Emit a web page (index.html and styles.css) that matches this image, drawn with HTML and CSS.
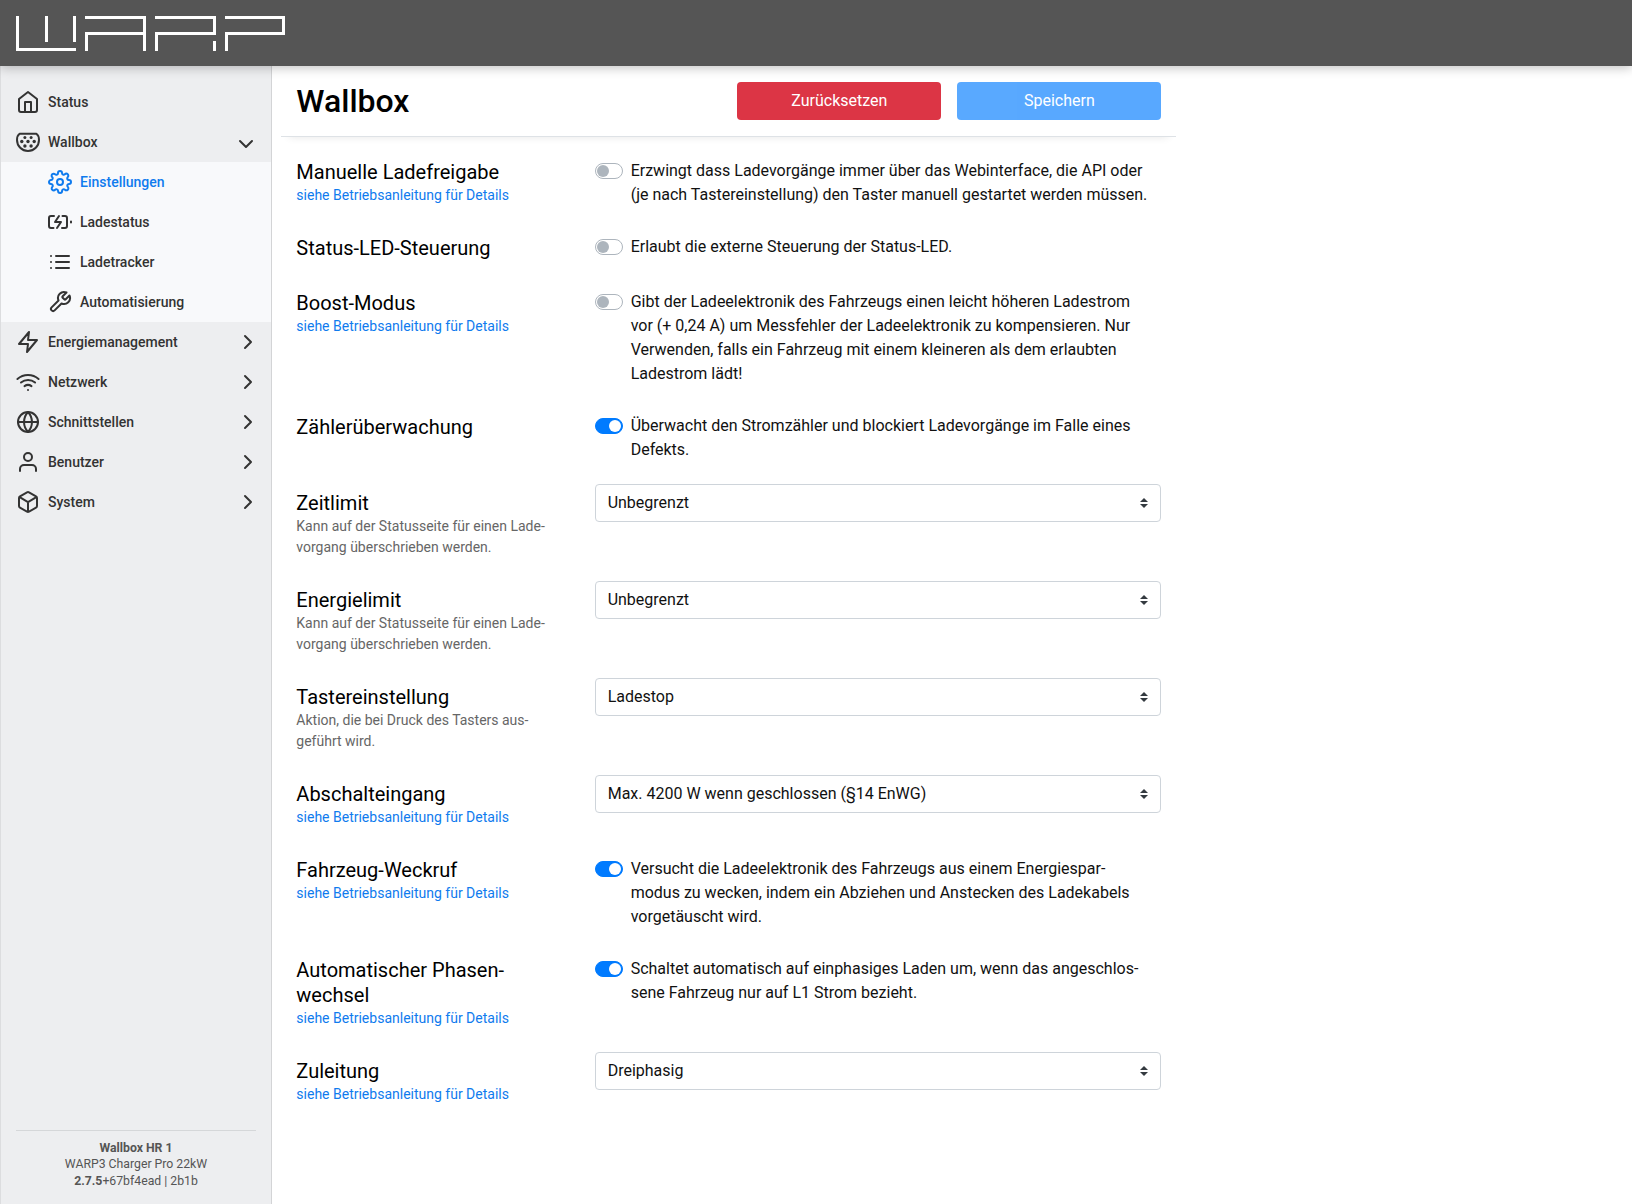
FILE: index.html
```html
<!DOCTYPE html>
<html lang="de">
<head>
<meta charset="utf-8">
<title>Wallbox</title>
<link rel="stylesheet" href="styles.css">
</head>
<body>
<header class="topbar">
  <svg class="logo" width="269" height="35" viewBox="0 0 269 35" fill="none" stroke="#fff" stroke-width="3">
    <path d="M1.5 0V33.5H60M30.5 0V26M58.5 0V26"/>
    <path d="M69 1.5H128.500V35M70.500 35V17.500H128"/>
    <path d="M139 1.5H198.500V17.500H140.500V35M198.500 25V35"/>
    <path d="M209 1.5H267.500V17.500H210.500V35"/>
  </svg>
</header>
<div class="layout">
  <nav class="sidebar">
    <ul class="menu">
      <li class="item"><svg class="icon" viewBox="0 0 24 24"><path d="M3 9l9-7 9 7v11a2 2 0 0 1-2 2H5a2 2 0 0 1-2-2z"/><path d="M9 22V12h6v10"/></svg>Status</li>
      <li class="item"><svg class="icon" viewBox="0 0 24 24"><path d="M3.600 3.700H20.400Q23 5.500 23 10A11 11 0 0 1 1 10Q1 5.500 3.600 3.700Z"/><g class="pins"><circle cx="8.900" cy="7.400" r="1.500"/><circle cx="15.100" cy="7.400" r="1.500"/><circle cx="5.800" cy="11.500" r="1.700"/><circle cx="12" cy="11.500" r="1.700"/><circle cx="18.200" cy="11.500" r="1.700"/><circle cx="8.900" cy="16" r="1.700"/><circle cx="15.100" cy="16" r="1.700"/></g></svg>Wallbox<svg class="chevron chevron-open" viewBox="0 0 24 24"><path d="M6 9l6 6 6-6"/></svg></li>
      <li>
        <ul class="submenu">
          <li class="item active"><svg class="icon" viewBox="0 0 24 24"><circle cx="12" cy="12" r="3"/><path d="M19.400 15a1.650 1.650 0 0 0 .33 1.820l.06.06a2 2 0 0 1 0 2.830 2 2 0 0 1-2.830 0l-.06-.06a1.650 1.650 0 0 0-1.820-.33 1.650 1.650 0 0 0-1 1.510V21a2 2 0 0 1-2 2 2 2 0 0 1-2-2v-.09A1.650 1.650 0 0 0 9 19.400a1.650 1.650 0 0 0-1.820.33l-.06.06a2 2 0 0 1-2.830 0 2 2 0 0 1 0-2.830l.06-.06a1.650 1.650 0 0 0 .33-1.820 1.650 1.650 0 0 0-1.510-1H3a2 2 0 0 1-2-2 2 2 0 0 1 2-2h.09A1.650 1.650 0 0 0 4.600 9a1.650 1.650 0 0 0-.33-1.820l-.06-.06a2 2 0 0 1 0-2.830 2 2 0 0 1 2.830 0l.06.06a1.650 1.650 0 0 0 1.820.33H9a1.650 1.650 0 0 0 1-1.510V3a2 2 0 0 1 2-2 2 2 0 0 1 2 2v.09a1.650 1.650 0 0 0 1 1.510 1.650 1.650 0 0 0 1.820-.33l.06-.06a2 2 0 0 1 2.830 0 2 2 0 0 1 0 2.830l-.06.06a1.650 1.650 0 0 0-.33 1.820V9a1.650 1.650 0 0 0 1.510 1H21a2 2 0 0 1 2 2 2 2 0 0 1-2 2h-.09a1.650 1.650 0 0 0-1.510 1z"/></svg>Einstellungen</li>
          <li class="item"><svg class="icon" viewBox="0 0 24 24"><path d="M5.500 18H3a2 2 0 0 1-2-2V8a2 2 0 0 1 2-2h3M14.500 6H17a2 2 0 0 1 2 2v8a2 2 0 0 1-2 2h-3M11 6l-4 6h6l-4 6M23 11.500v1"/></svg>Ladestatus</li>
          <li class="item"><svg class="icon" viewBox="0 0 24 24"><path d="M8 6h13M8 12h13M8 18h13M3 6h.01M3 12h.01M3 18h.01"/></svg>Ladetracker</li>
          <li class="item"><svg class="icon" viewBox="0 0 24 24"><path d="M14.700 6.300a1 1 0 0 0 0 1.400l1.600 1.600a1 1 0 0 0 1.400 0l3.770-3.770a6 6 0 0 1-7.940 7.940l-6.910 6.910a2.120 2.120 0 0 1-3-3l6.910-6.910a6 6 0 0 1 7.940-7.940l-3.760 3.760z"/></svg>Automatisierung</li>
        </ul>
      </li>
      <li class="item"><svg class="icon" viewBox="0 0 24 24"><path d="M13 2L3 14h9l-1 8 10-12h-9l1-8z"/></svg>Energiemanagement<svg class="chevron" viewBox="0 0 24 24"><path d="M9 18l6-6-6-6"/></svg></li>
      <li class="item"><svg class="icon" viewBox="0 0 24 24"><path d="M5 12.550a11 11 0 0 1 14.080 0M1.420 9a16 16 0 0 1 21.160 0M8.530 16.110a6 6 0 0 1 6.950 0M12 20h.01"/></svg>Netzwerk<svg class="chevron" viewBox="0 0 24 24"><path d="M9 18l6-6-6-6"/></svg></li>
      <li class="item"><svg class="icon" viewBox="0 0 24 24"><circle cx="12" cy="12" r="10"/><path d="M2 12h20M12 2a15.300 15.300 0 0 1 4 10 15.300 15.300 0 0 1-4 10 15.300 15.300 0 0 1-4-10 15.300 15.300 0 0 1 4-10z"/></svg>Schnittstellen<svg class="chevron" viewBox="0 0 24 24"><path d="M9 18l6-6-6-6"/></svg></li>
      <li class="item"><svg class="icon" viewBox="0 0 24 24"><path d="M20 21v-2a4 4 0 0 0-4-4H8a4 4 0 0 0-4 4v2"/><circle cx="12" cy="7" r="4"/></svg>Benutzer<svg class="chevron" viewBox="0 0 24 24"><path d="M9 18l6-6-6-6"/></svg></li>
      <li class="item"><svg class="icon" viewBox="0 0 24 24"><path d="M21 16V8a2 2 0 0 0-1-1.730l-7-4a2 2 0 0 0-2 0l-7 4A2 2 0 0 0 3 8v8a2 2 0 0 0 1 1.730l7 4a2 2 0 0 0 2 0l7-4A2 2 0 0 0 21 16zM3.270 6.960L12 12.010l8.730-5.050M12 22.080V12"/></svg>System<svg class="chevron" viewBox="0 0 24 24"><path d="M9 18l6-6-6-6"/></svg></li>
    </ul>
    <div class="device">
      <div><b>Wallbox HR 1</b></div>
      <div>WARP3 Charger Pro 22kW</div>
      <div><b>2.7.5</b>+67bf4ead | 2b1b</div>
    </div>
  </nav>
  <main class="content">
    <div class="page-header">
      <h1>Wallbox</h1>
      <button class="btn btn-danger">Zurücksetzen</button>
      <button class="btn btn-primary">Speichern</button>
    </div>
    <form class="form">
      <div class="row">
        <div class="label">Manuelle Ladefreigabe<a class="hint link">siehe Betriebsanleitung für Details</a></div>
        <div class="field check"><span class="switch"></span><span>Erzwingt dass Ladevorgänge immer über das Webinterface, die API oder (je nach Tastereinstellung) den Taster manuell gestartet werden müssen.</span></div>
      </div>
      <div class="row">
        <div class="label">Status-LED-Steuerung</div>
        <div class="field check"><span class="switch"></span><span>Erlaubt die externe Steuerung der Status-LED.</span></div>
      </div>
      <div class="row">
        <div class="label">Boost-Modus<a class="hint link">siehe Betriebsanleitung für Details</a></div>
        <div class="field check"><span class="switch"></span><span>Gibt der Ladeelektronik des Fahrzeugs einen leicht höheren Ladestrom vor (+ 0,24 A) um Messfehler der Ladeelektronik zu kompensieren. Nur Verwenden, falls ein Fahrzeug mit einem kleineren als dem erlaubten Ladestrom lädt!</span></div>
      </div>
      <div class="row">
        <div class="label">Zählerüberwachung</div>
        <div class="field check"><span class="switch on"></span><span>Überwacht den Stromzähler und blockiert Ladevorgänge im Falle eines Defekts.</span></div>
      </div>
      <div class="row">
        <div class="label">Zeitlimit<span class="hint">Kann auf der Statusseite für einen Lade&shy;vorgang überschrieben werden.</span></div>
        <div class="field"><div class="select">Unbegrenzt<svg class="caret" viewBox="0 0 4 5"><path d="M2 0L0 2h4zm0 5L0 3h4z"/></svg></div></div>
      </div>
      <div class="row">
        <div class="label">Energielimit<span class="hint">Kann auf der Statusseite für einen Lade&shy;vorgang überschrieben werden.</span></div>
        <div class="field"><div class="select">Unbegrenzt<svg class="caret" viewBox="0 0 4 5"><path d="M2 0L0 2h4zm0 5L0 3h4z"/></svg></div></div>
      </div>
      <div class="row">
        <div class="label">Tastereinstellung<span class="hint">Aktion, die bei Druck des Tasters aus&shy;geführt wird.</span></div>
        <div class="field"><div class="select">Ladestop<svg class="caret" viewBox="0 0 4 5"><path d="M2 0L0 2h4zm0 5L0 3h4z"/></svg></div></div>
      </div>
      <div class="row">
        <div class="label">Abschalteingang<a class="hint link">siehe Betriebsanleitung für Details</a></div>
        <div class="field"><div class="select">Max. 4200 W wenn geschlossen (§14 EnWG)<svg class="caret" viewBox="0 0 4 5"><path d="M2 0L0 2h4zm0 5L0 3h4z"/></svg></div></div>
      </div>
      <div class="row">
        <div class="label">Fahrzeug-Weckruf<a class="hint link">siehe Betriebsanleitung für Details</a></div>
        <div class="field check"><span class="switch on"></span><span>Versucht die Ladeelektronik des Fahrzeugs aus einem Energiespar&shy;modus zu wecken, indem ein Abziehen und Anstecken des Ladekabels vorgetäuscht wird.</span></div>
      </div>
      <div class="row">
        <div class="label">Automatischer Phasen&shy;wechsel<a class="hint link">siehe Betriebsanleitung für Details</a></div>
        <div class="field check"><span class="switch on"></span><span>Schaltet automatisch auf einphasiges Laden um, wenn das angeschlos&shy;sene Fahrzeug nur auf L1 Strom bezieht.</span></div>
      </div>
      <div class="row">
        <div class="label">Zuleitung<a class="hint link">siehe Betriebsanleitung für Details</a></div>
        <div class="field"><div class="select">Dreiphasig<svg class="caret" viewBox="0 0 4 5"><path d="M2 0L0 2h4zm0 5L0 3h4z"/></svg></div></div>
      </div>
    </form>
  </main>
</div>
</body>
</html>
```
FILE: styles.css
```css
* { box-sizing: border-box; }
body {
  margin: 0;
  height: 100vh;
  display: flex;
  flex-direction: column;
  overflow: hidden;
  font: 16px/24px Roboto, "Liberation Sans", sans-serif;
  color: #000;
  background: #fff;
}
ul { list-style: none; margin: 0; padding: 0; }

.topbar {
  flex: none;
  height: 66px;
  padding: 16px;
  background: #555;
  box-shadow: 0 2px 10px rgba(0, 0, 0, .24);
  z-index: 2;
}
.logo { display: block; }

.layout { flex: 1; display: flex; min-height: 0; }

.sidebar {
  width: 272px;
  flex: none;
  display: flex;
  flex-direction: column;
  justify-content: space-between;
  padding-top: 16px;
  background: #edeef0;
  border-left: 1px solid #dcdddf;
  border-right: 1px solid #d3d4d6;
}
.item {
  height: 40px;
  display: flex;
  align-items: center;
  gap: 8px;
  padding: 0 11px 0 15px;
  font-size: 14px;
  font-weight: 500;
  color: #333;
}
.submenu { background: #f8f9fb; }
.submenu .item { padding-left: 47px; }
.item.active { color: #0f7bee; }
.icon, .chevron {
  width: 24px;
  height: 24px;
  flex: none;
  fill: none;
  stroke: currentColor;
  stroke-width: 2;
  stroke-linecap: round;
  stroke-linejoin: round;
}
.chevron { margin-left: auto; }
.chevron-open { margin-right: 2px; margin-top: 4px; }
.pins { fill: currentColor; stroke: none; }

.device {
  margin: 0 15px;
  padding: 9px 0 15px;
  border-top: 1px solid #d5d7d9;
  font-size: 12.250px;
  line-height: 16.500px;
  text-align: center;
  color: #555;
}

.content { width: 895px; margin-left: 9.330px; }
.page-header {
  height: 71px;
  display: flex;
  align-items: flex-start;
  gap: 16px;
  padding: 16px 15px 0;
  border-bottom: 1px solid #dee2e6;
  box-shadow: 0 8px 8px -8px rgba(0, 0, 0, .1);
}
h1 {
  margin: 0 auto 0 0;
  font-size: 32px;
  line-height: 38px;
  font-weight: 500;
}
.btn {
  width: 204px;
  height: 38px;
  padding: 0;
  border: 0;
  border-radius: 4px;
  font: inherit;
  color: #fff;
}
.btn-danger { background: #dc3545; }
.btn-primary { background: #007bff; opacity: .65; }

.form { padding-top: 16px; }
.row {
  display: grid;
  grid-template-columns: 1fr 2fr;
  align-items: start;
  margin-bottom: 16px;
}
.label {
  padding: 7px 15px;
  font-size: 20px;
  line-height: 25px;
}
.hint {
  display: block;
  font-size: 14px;
  line-height: 21px;
  color: #666;
}
.link { color: #0f7bee; }
.field { padding: 0 15px; }
.check {
  display: flex;
  gap: 8px;
  padding: 6px 27.500px 6px 15px;
  color: #111;
}
.switch {
  width: 28px;
  height: 16px;
  flex: none;
  display: flex;
  margin-top: 4px;
  padding: 1px;
  border: 1px solid #adb5bd;
  border-radius: 8px;
}
.switch::before {
  content: "";
  width: 12px;
  height: 12px;
  border-radius: 50%;
  background: #adb5bd;
}
.switch.on {
  justify-content: flex-end;
  background: #007bff;
  border-color: #007bff;
}
.switch.on::before { background: #fff; }
.select {
  height: 38px;
  display: flex;
  align-items: center;
  justify-content: space-between;
  padding: 0 12px;
  border: 1px solid #ced4da;
  border-radius: 4px;
  color: #111;
}
.caret { width: 8px; height: 10px; fill: #343a40; }
```
